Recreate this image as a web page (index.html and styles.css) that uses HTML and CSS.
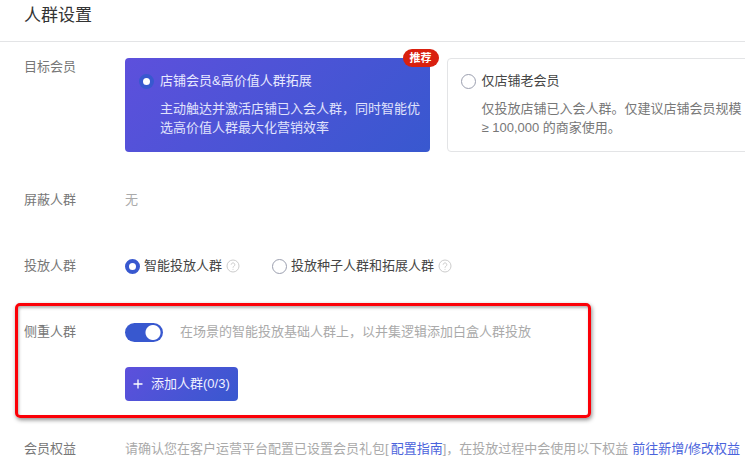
FILE: index.html
```html
<!DOCTYPE html>
<html lang="zh-CN">
<head>
<meta charset="utf-8">
<meta name="viewport" content="width=device-width, initial-scale=1">
<title>人群设置</title>
<link rel="stylesheet" href="styles.css">
</head>
<body>
<header class="header">
  <h1 class="title">人群设置</h1>
</header>
<main class="form">
  <section class="row row-member">
    <h2 class="label">目标会员</h2>
    <div class="cards">
      <label class="card card-active">
        <input class="radio" type="radio" name="member" checked>
        <span class="card-title">店铺会员&amp;高价值人群拓展</span>
        <span class="card-text">主动触达并激活店铺已入会人群，同时智能优选高价值人群最大化营销效率</span>
        <span class="badge">推荐</span>
      </label>
      <label class="card">
        <input class="radio" type="radio" name="member">
        <span class="card-title">仅店铺老会员</span>
        <span class="card-text">仅投放店铺已入会人群。仅建议店铺会员规模 ≥ 100,000 的商家使用。</span>
      </label>
    </div>
  </section>
  <section class="row row-block">
    <h2 class="label">屏蔽人群</h2>
    <p class="hint">无</p>
  </section>
  <section class="row row-audience">
    <h2 class="label">投放人群</h2>
    <div class="options">
      <label class="option">
        <input class="radio" type="radio" name="audience" checked>
        <span>智能投放人群</span>
        <svg class="help" viewBox="0 0 14 14" aria-hidden="true"><circle cx="7" cy="7" r="6"/><path d="M5.2 5.7a1.8 1.8 0 1 1 2.9 1.4C7.4 7.6 7 7.9 7 8.7M7 9.9v.9"/></svg>
      </label>
      <label class="option">
        <input class="radio" type="radio" name="audience">
        <span>投放种子人群和拓展人群</span>
        <svg class="help" viewBox="0 0 14 14" aria-hidden="true"><circle cx="7" cy="7" r="6"/><path d="M5.2 5.7a1.8 1.8 0 1 1 2.9 1.4C7.4 7.6 7 7.9 7 8.7M7 9.9v.9"/></svg>
      </label>
    </div>
  </section>
  <section class="row row-focus">
    <h2 class="label" id="focus-label">侧重人群</h2>
    <div class="focus">
      <div class="focus-line">
        <input class="switch" type="checkbox" role="switch" aria-labelledby="focus-label" checked>
        <p class="hint">在场景的智能投放基础人群上，以并集逻辑添加白盒人群投放</p>
      </div>
      <button class="add" type="button">
        <svg class="plus" viewBox="0 0 10 10" aria-hidden="true"><path d="M5 .5v9M.5 5h9"/></svg>
        <span>添加人群(0/3)</span>
      </button>
    </div>
  </section>
  <section class="row row-benefit">
    <h2 class="label">会员权益</h2>
    <p class="hint benefit">请确认您在客户运营平台配置已设置会员礼包[<a class="link" href="#guide">配置指南</a>]，在投放过程中会使用以下权益<a class="link link-edit" href="#benefit">前往新增/修改权益</a></p>
  </section>
</main>
</body>
</html>
```
FILE: styles.css
```css
* {
  box-sizing: border-box;
}

body {
  margin: 0;
  overflow: hidden;
  background: #fff;
  color: #444;
  font-family: "Liberation Sans", "Noto Sans CJK SC", sans-serif;
  font-size: 13px;
  line-height: 20px;
}

h1,
h2,
p {
  margin: 0;
  font-weight: 400;
}

.header {
  padding: 4px 24px 13px;
  border-bottom: 1px solid #e3e4e6;
}

.title {
  color: #333;
  font-size: 17px;
  line-height: 24px;
}

.form {
  padding-top: 15px;
}

.row {
  display: grid;
  grid-template-columns: 101px minmax(0, 1fr);
  padding-left: 24px;
}

.label {
  color: #777;
  font-size: 13px;
}

.hint {
  color: #aaa;
}

/* Target member cards */

.cards {
  display: grid;
  grid-template-columns: 1fr 1fr;
  gap: 17px;
  margin: 1px -6px 0 0;
}

.card {
  position: relative;
  display: grid;
  grid-template-columns: 14px 1fr;
  column-gap: 7px;
  row-gap: 8px;
  align-items: center;
  padding: 12px 7px 14px 13px;
  border: 1px solid #e3e4e6;
  border-radius: 4px;
}

.card-active {
  border: 0;
  padding: 13px 8px 15px 14px;
  background: linear-gradient(135deg, #5d50dc, #3858cf);
  color: #e8eaff;
}

.card-text {
  grid-column: 2;
  color: #777;
  line-height: 19px;
}

.card-active .card-text {
  color: #e0e3fc;
}

.badge {
  position: absolute;
  top: -9px;
  right: -9px;
  padding: 0 7px;
  border-radius: 9px;
  background: #d9200f;
  color: #fff;
  font-size: 11px;
  font-weight: 700;
  line-height: 18px;
}

.radio {
  appearance: none;
  width: 15px;
  height: 15px;
  margin: 0;
  border: 1px solid #9b9faf;
  border-radius: 50%;
  background: #fff;
}

.radio:checked {
  border: 4px solid #3858cf;
}

/* Audience rows */

.row-block {
  margin-top: 38px;
}

.row-audience {
  margin-top: 46px;
}

.options {
  display: flex;
  gap: 32px;
}

.option {
  display: flex;
  align-items: center;
  gap: 4px;
}

.help {
  width: 14px;
  height: 14px;
  fill: none;
  stroke: #ccc;
  stroke-width: 1;
}

/* Highlighted focus row */

.row-focus {
  margin: 27px 154px 0 15px;
  padding: 16px 0 14px 6px;
  border: 3px solid #fb0007;
  border-radius: 5px;
  box-shadow: 1px 2px 4px rgba(0, 0, 0, 0.45), inset 1px 2px 3px rgba(0, 0, 0, 0.3);
}

.focus {
  display: grid;
  justify-items: start;
  gap: 25px;
}

.focus-line {
  display: flex;
  align-items: center;
  gap: 17px;
}

.switch {
  appearance: none;
  flex: none;
  width: 38px;
  height: 19px;
  margin: 0;
  border-radius: 10px;
  background: radial-gradient(circle at 28px 50%, #fff 7px, #3858cf 8px);
}

.add {
  display: flex;
  align-items: center;
  gap: 8px;
  height: 34px;
  padding: 0 8px;
  border: 0;
  border-radius: 4px;
  background: linear-gradient(135deg, #5d50dc, #3858cf);
  color: #f0f1ff;
  font: inherit;
}

.plus {
  width: 10px;
  height: 10px;
  fill: none;
  stroke: #fff;
  stroke-width: 1.3;
}

/* Benefits */

.row-benefit {
  margin-top: 21px;
}

.benefit {
  white-space: nowrap;
}

.link {
  margin-left: 2px;
  color: #4a63dc;
  text-decoration: none;
}

.link-edit {
  margin-left: 4px;
}
```
